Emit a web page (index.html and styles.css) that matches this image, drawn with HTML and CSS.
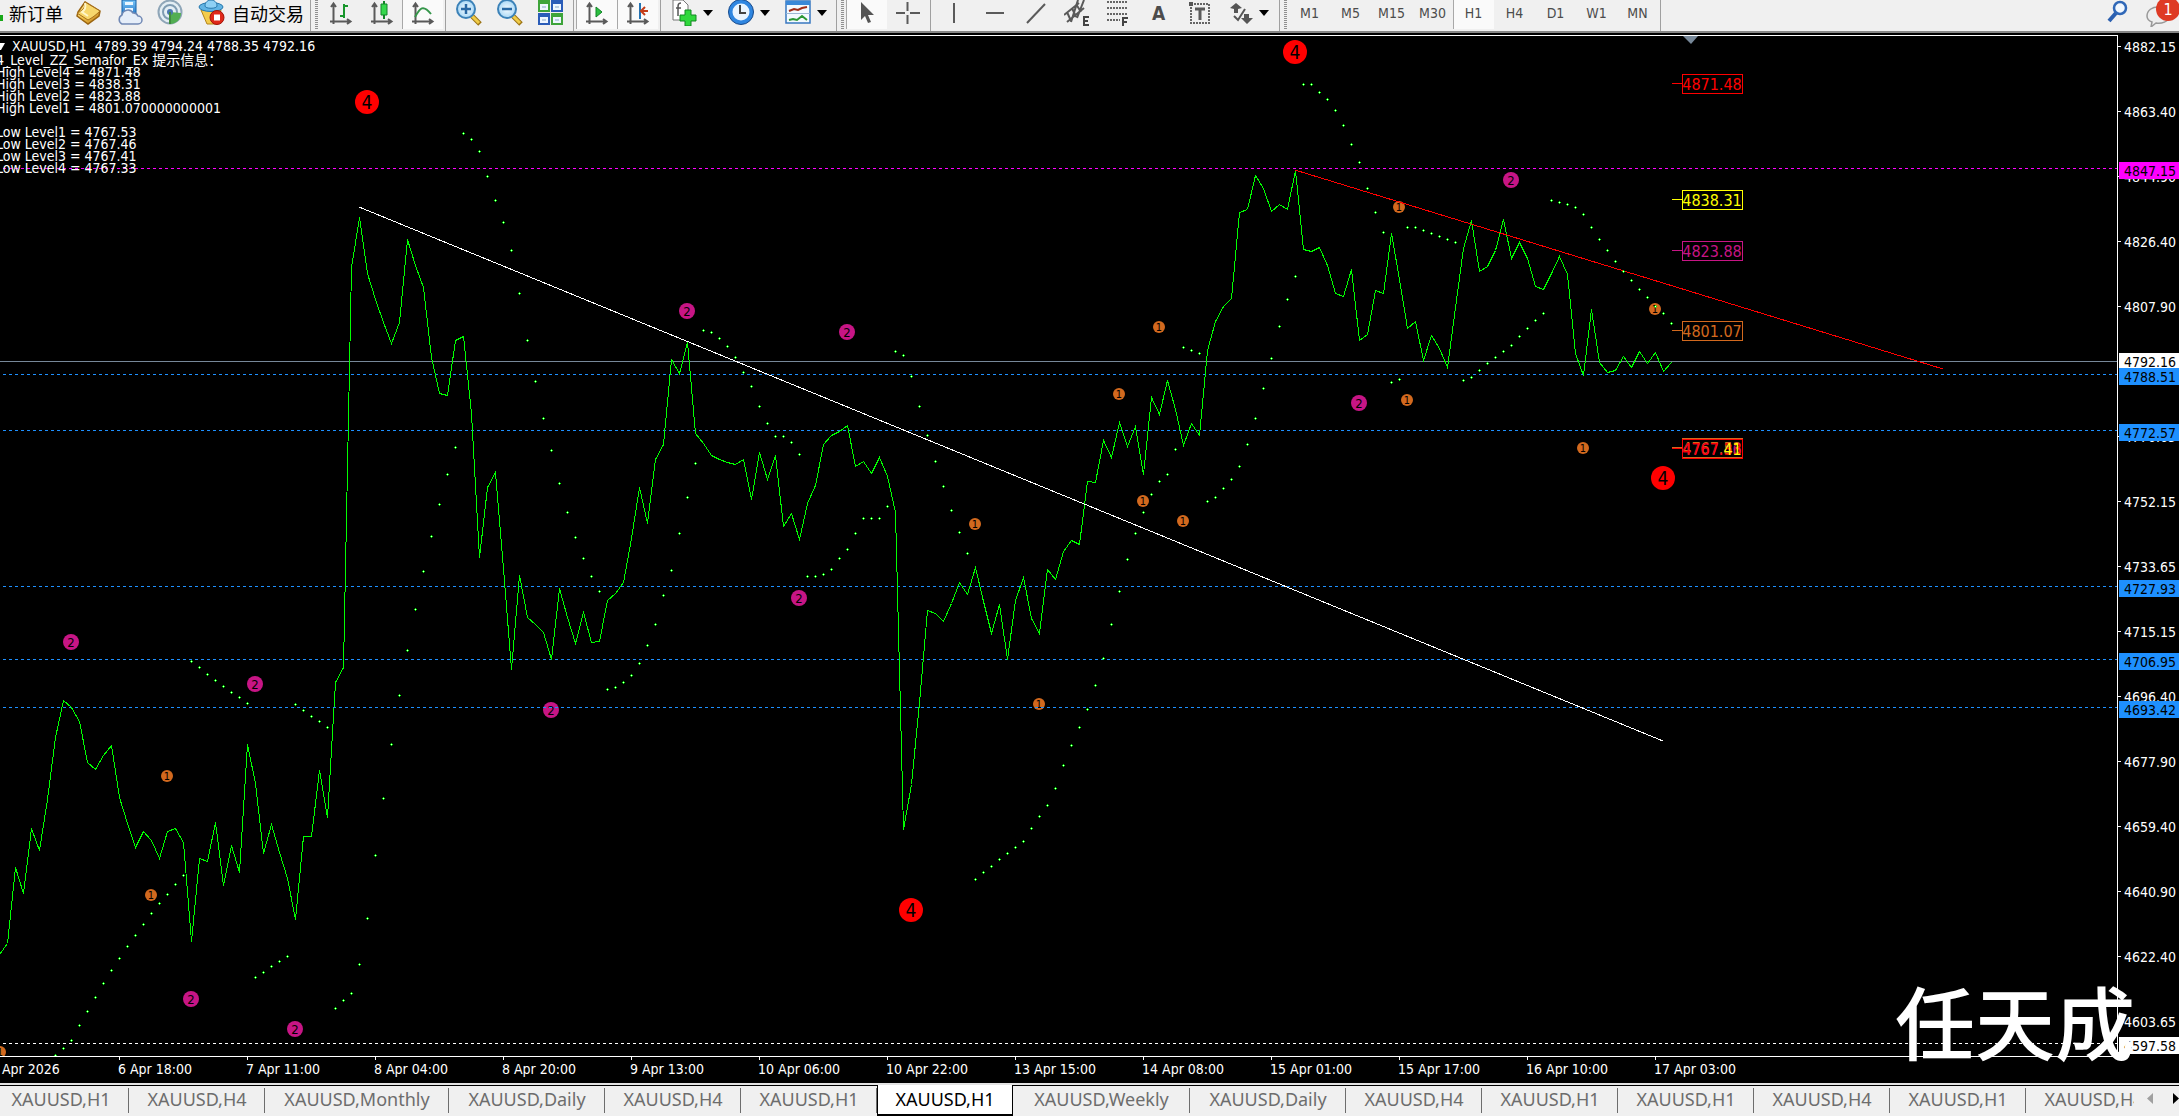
FILE: index.html
```html
<!DOCTYPE html>
<html lang="zh-CN">
<head>
<meta charset="utf-8">
<title>XAUUSD,H1</title>
<link rel="stylesheet" href="styles.css">
</head>
<body>
<svg class="defs" aria-hidden="true">
  <defs>
    <linearGradient id="gold" x1="0" y1="0" x2="1" y2="1"><stop offset="0" stop-color="#fff3a8"/><stop offset=".5" stop-color="#f0c04a"/><stop offset="1" stop-color="#b87812"/></linearGradient>
    <linearGradient id="blue" x1="0" y1="0" x2="0" y2="1"><stop offset="0" stop-color="#7cc8f8"/><stop offset="1" stop-color="#1c6fc4"/></linearGradient>
    <radialGradient id="lens"><stop offset="0" stop-color="#f4fbff"/><stop offset="1" stop-color="#a9d8f6"/></radialGradient>
    <symbol id="axes" viewBox="0 0 24 24"><path d="M4.500 3v20M1 20.500h20M2 6l2.500-3.500L7 6M18 18l3.500 2.500L18 23" fill="none" stroke="#5a5a5a" stroke-width="2"/></symbol>
  </defs>
</svg>

<header class="toolbar">
  <button class="tool tool--order"><svg width="3" height="26" viewBox="0 0 3 26"><path d="M0 15h3v6H0z" fill="#18a818"/></svg><span>新订单</span></button>
  <button class="tool" aria-label="Market"><svg width="26" height="26" viewBox="0 0 26 26"><path d="M9 2l15 9-1 5-11 8-11-8 1-4z" fill="url(#gold)" stroke="#9a6410" stroke-width="1.500"/><path d="M9 2c1 4-1 8-8 11l11 7c4-2 8-5 12-9z" fill="#f7d76c" stroke="#a8701a"/><path d="M9 3c1 4 0 7-3 9l6 4" fill="none" stroke="#fff6c8" stroke-width="2"/></svg></button>
  <button class="tool" aria-label="Cloud"><svg width="26" height="26" viewBox="0 0 26 26"><path d="M5 0h14v16H5z" fill="url(#blue)" stroke="#1560a8"/><path d="M8 2h8v3H8zM8 8h8v3H8z" fill="#e8f6ff"/><path d="M5 24a5 5 0 0 1 0-9 6 6 0 0 1 11-2 5 5 0 0 1 5 3 4 4 0 0 1 0 8z" fill="#e6eef9" stroke="#7088b4" stroke-width="1.500"/></svg></button>
  <button class="tool" aria-label="Signals"><svg width="27" height="26" viewBox="0 0 27 26"><circle cx="13" cy="12" r="11.500" fill="#e4eef4" stroke="#8fa6b8" stroke-width="2"/><circle cx="13" cy="12" r="7" fill="none" stroke="#7f9cb2" stroke-width="2"/><path d="M13 12l11 1c0 6-4 10-10 11z" fill="#52ae52"/><circle cx="13" cy="12" r="3" fill="#4a78b0"/><path d="M13 12v12" stroke="#3f8c3f" stroke-width="2"/></svg></button>
  <button class="tool tool--auto"><svg width="27" height="26" viewBox="0 0 27 26"><path d="M3 10h20l-4 14H9z" fill="#f4cc4c" stroke="#b48418"/><ellipse cx="13" cy="7" rx="12" ry="4.500" fill="#62b4e4" stroke="#2878ac"/><path d="M7 6c0-8 12-8 12 0 0 3-12 3-12 0z" fill="#8ed0f4" stroke="#2878ac"/><circle cx="19" cy="17.500" r="7" fill="#e02818" stroke="#a01408"/><path d="M16 14.500h6v6h-6z" fill="#fff"/></svg><span>自动交易</span></button>
  <i class="sep"></i><i class="grip"></i>
  <button class="tool" aria-label="Bar chart"><svg width="24" height="24"><use href="#axes"/><path d="M15 3v14M15 5h4M11 15h4" stroke="#18962c" stroke-width="2"/></svg></button>
  <button class="tool" aria-label="Candlesticks"><svg width="24" height="24"><use href="#axes"/><path d="M14 0v18" stroke="#128428" stroke-width="2"/><path d="M11 3h6v11h-6z" fill="#35d84c" stroke="#128428"/></svg></button>
  <button class="tool tool--on" aria-label="Line chart"><svg width="24" height="24"><use href="#axes"/><path d="M4 16c5-9 8-13 16-3" fill="none" stroke="#35964a" stroke-width="2"/></svg></button>
  <i class="sep"></i>
  <button class="tool" aria-label="Zoom in"><svg width="26" height="26" viewBox="0 0 26 26"><path d="M16 16l8 8" stroke="#9c7414" stroke-width="5"/><path d="M16 16l7 7" stroke="#f0cc48" stroke-width="3"/><circle cx="10" cy="9" r="9" fill="url(#lens)" stroke="#3c82b8" stroke-width="2"/><path d="M5 9h10M10 4v10" stroke="#2868a4" stroke-width="2.500"/></svg></button>
  <button class="tool" aria-label="Zoom out"><svg width="26" height="26" viewBox="0 0 26 26"><path d="M16 16l8 8" stroke="#9c7414" stroke-width="5"/><path d="M16 16l7 7" stroke="#f0cc48" stroke-width="3"/><circle cx="10" cy="9" r="9" fill="url(#lens)" stroke="#3c82b8" stroke-width="2"/><path d="M5 9h10" stroke="#2868a4" stroke-width="2.500"/></svg></button>
  <button class="tool" aria-label="Tile windows"><svg width="26" height="26" viewBox="0 0 26 26"><path d="M0 0h12v12H0zM13 13h12v12H13z" fill="#3ea43a"/><path d="M13 0h12v12H13zM0 13h12v12H0z" fill="#2a5cb8"/><path d="M2 4h8v6H2zM15 4h8v6h-8zM2 17h8v6H2zM15 17h8v6h-8z" fill="#eef6ff"/><path d="M4 7h4M17 7h4M4 20h4M17 20h4" stroke="#88a8c8"/></svg></button>
  <i class="sep"></i>
  <button class="tool tool--on" aria-label="Auto scroll"><svg width="24" height="24"><use href="#axes"/><path d="M11 6l6 5-6 5z" fill="#2cc040" stroke="#128428"/></svg></button>
  <button class="tool tool--on" aria-label="Chart shift"><svg width="24" height="24"><use href="#axes"/><path d="M14 2v16" stroke="#2474b4" stroke-width="2"/><path d="M22 10h-6m3-4l-4 4 4 4" fill="none" stroke="#c43c18" stroke-width="2"/></svg></button>
  <i class="sep"></i>
  <button class="tool tool--drop" aria-label="Indicators"><svg width="26" height="27" viewBox="0 0 26 27"><path d="M2 1h10l5 5v15H2z" fill="#fff" stroke="#777"/><path d="M10 4c-3 0-3 2-3 5v8M5 9h5" fill="none" stroke="#555" stroke-width="1.500"/><path d="M14 11h6v5h5v6h-5v5h-6v-5H9v-6h5z" fill="#2fd83c" stroke="#108820"/></svg><i class="caret"></i></button>
  <button class="tool tool--drop" aria-label="Periods"><svg width="26" height="26" viewBox="0 0 26 26"><circle cx="13" cy="12" r="10.500" fill="#eaf5ff" stroke="#2f86e0" stroke-width="4"/><circle cx="13" cy="12" r="12.500" fill="none" stroke="#174a8c"/><path d="M12 5v8h6" fill="none" stroke="#444" stroke-width="2"/></svg><i class="caret"></i></button>
  <button class="tool tool--drop" aria-label="Templates"><svg width="26" height="26" viewBox="0 0 26 26"><path d="M1 1h24v22H1z" fill="#f4faff" stroke="#3878c0" stroke-width="1.500"/><path d="M1 1h24v4H1z" fill="#3a88d8"/><path d="M4 11l5-2 4 1 4-2 5-1" fill="none" stroke="#a02c18" stroke-width="2"/><path d="M1 13.500h24" stroke="#9cb8d4"/><path d="M4 20l4-1 4 1 5-4 5 4" fill="none" stroke="#2a9834" stroke-width="2"/></svg><i class="caret"></i></button>
  <i class="sep"></i><i class="grip"></i>
  <button class="tool tool--on" aria-label="Cursor"><svg width="14" height="24" viewBox="0 0 14 24"><path d="M1 1v18l4-4 3 7 3-1-3-7h6z" fill="#555"/></svg></button>
  <button class="tool" aria-label="Crosshair"><svg width="24" height="24" viewBox="0 0 24 24"><path d="M11.500 1v9M11.500 14v9M0 12h9M14 12h10" stroke="#5a5a5a" stroke-width="2"/></svg></button>
  <i class="sep"></i>
  <button class="tool" aria-label="Vertical line"><svg width="24" height="24" viewBox="0 0 24 24"><path d="M12 2v20" stroke="#5a5a5a" stroke-width="2"/></svg></button>
  <button class="tool" aria-label="Horizontal line"><svg width="24" height="24" viewBox="0 0 24 24"><path d="M3 12h18" stroke="#5a5a5a" stroke-width="2"/></svg></button>
  <button class="tool" aria-label="Trend line"><svg width="24" height="24" viewBox="0 0 24 24"><path d="M3 22L21 3" stroke="#5a5a5a" stroke-width="2"/></svg></button>
  <button class="tool" aria-label="Channel"><svg width="26" height="26" viewBox="0 0 26 26"><path d="M0 15L15 3M3 22L20 8M3 12l4 9M8 8l4 9M12 4l5 8M14 0L7 22M20 0l-7 18" fill="none" stroke="#5a5a5a" stroke-width="2"/><path d="M25 17h-5v8h5M20 21h4" fill="none" stroke="#444" stroke-width="2"/></svg></button>
  <button class="tool" aria-label="Fibonacci"><svg width="24" height="26" viewBox="0 0 24 26"><path d="M1 2h21M1 8h21M1 14h21M1 20h13" stroke="#666" stroke-width="2" stroke-dasharray="2 1"/><path d="M22 18h-5v8M17 22h4" fill="none" stroke="#444" stroke-width="2"/></svg></button>
  <button class="tool tool--letter" aria-label="Text">A</button>
  <button class="tool" aria-label="Text label"><svg width="22" height="24" viewBox="0 0 22 24"><path d="M2 3h18v19H2z" fill="none" stroke="#666" stroke-width="2" stroke-dasharray="2 1"/><path d="M6 8h10M11 8v11" stroke="#5a5a5a" stroke-width="3"/><path d="M0 1h4v4H0z" fill="#555"/></svg></button>
  <button class="tool tool--drop" aria-label="Arrows"><svg width="24" height="24" viewBox="0 0 24 24"><path d="M7 2l6 5-4 1v4H5V8L1 7zM15 13h5v4h4l-6 6-6-6h3z" fill="#555"/><path d="M5 15l4 4 7-11" fill="none" stroke="#555" stroke-width="2"/></svg><i class="caret"></i></button>
  <i class="sep"></i><i class="grip"></i>
  <button class="tool">M1</button>
  <button class="tool">M5</button>
  <button class="tool">M15</button>
  <button class="tool">M30</button>
  <button class="tool tool--on">H1</button>
  <button class="tool">H4</button>
  <button class="tool">D1</button>
  <button class="tool">W1</button>
  <button class="tool">MN</button>
  <i class="sep"></i>
  <div class="status">
    <button class="status-item" aria-label="Search"><svg width="22" height="24" viewBox="0 0 22 24"><path d="M9 13l-7 8" stroke="#2c60b0" stroke-width="4"/><circle cx="13" cy="8" r="6" fill="#f2f8ff" stroke="#3068b8" stroke-width="2.500"/></svg></button>
    <button class="status-item" aria-label="Messages"><svg width="33" height="27" viewBox="0 0 33 27"><path d="M1 16c0-12 22-12 22 0 0 6-8 8-13 7l-5 4 1-5c-3-1-5-3-5-6z" fill="#eee" stroke="#999" stroke-width="1.500"/><circle cx="22" cy="9" r="12" fill="#de3a24"/><text x="22" y="15" class="badge-text">1</text></svg></button>
  </div>
</header>

<main class="chart">
  <section class="plot">
    <svg class="canvas" id="plot" aria-label="XAUUSD H1"></svg>
    <div class="info">
      <p class="quote"><svg class="quote-mark" width="12" height="8" viewBox="0 0 12 8"><path d="M0 0h5L1 7H0z" fill="#fff"/></svg>XAUUSD,H1&nbsp; 4789.39 4794.24 4788.35 4792.16</p>
      <p class="comment">4_Level_ZZ_Semafor_Ex 提示信息：
High Level4 = 4871.48
High Level3 = 4838.31
High Level2 = 4823.88
High Level1 = 4801.070000000001

Low Level1 = 4767.53
Low Level2 = 4767.46
Low Level3 = 4767.41
Low Level4 = 4767.33</p>
    </div>
  </section>
  <svg class="price-axis" id="prices"></svg>
  <ol class="time-axis">
    <li>Apr 2026</li><li>6 Apr 18:00</li><li>7 Apr 11:00</li><li>8 Apr 04:00</li><li>8 Apr 20:00</li><li>9 Apr 13:00</li><li>10 Apr 06:00</li><li>10 Apr 22:00</li><li>13 Apr 15:00</li><li>14 Apr 08:00</li><li>15 Apr 01:00</li><li>15 Apr 17:00</li><li>16 Apr 10:00</li><li>17 Apr 03:00</li>
  </ol>
  <div class="signature">任天成</div>
</main>

<nav class="tabs">
  <div class="tab-strip">
    <button class="tab">XAUUSD,H1</button>
    <button class="tab">XAUUSD,H4</button>
    <button class="tab tab--monthly">XAUUSD,Monthly</button>
    <button class="tab tab--daily">XAUUSD,Daily</button>
    <button class="tab">XAUUSD,H4</button>
    <button class="tab">XAUUSD,H1</button>
    <button class="tab tab--active">XAUUSD,H1</button>
    <button class="tab tab--weekly">XAUUSD,Weekly</button>
    <button class="tab tab--daily">XAUUSD,Daily</button>
    <button class="tab">XAUUSD,H4</button>
    <button class="tab">XAUUSD,H1</button>
    <button class="tab">XAUUSD,H1</button>
    <button class="tab">XAUUSD,H4</button>
    <button class="tab">XAUUSD,H1</button>
    <button class="tab">XAUUSD,H4</button>
  </div>
  <button class="scroll" aria-label="Scroll left"><svg width="6" height="11" viewBox="0 0 6 11"><path d="M6 0v11L0 5.500z" fill="#a0a0a0"/></svg></button>
  <button class="scroll" aria-label="Scroll right"><svg width="6" height="11" viewBox="0 0 6 11"><path d="M0 0v11l6-5.500z" fill="#000"/></svg></button>
</nav>
<script src="chart.js"></script>
</body>
</html>
```
FILE: styles.css
```css
* { box-sizing: border-box; }

body {
  margin: 0;
  height: 100vh;
  display: flex;
  flex-direction: column;
  overflow: hidden;
  background: #000;
  color: #fff;
  font-family: "DejaVu Sans Condensed", "Noto Sans", "Noto Sans CJK SC", sans-serif;
  font-size: 14px;
}

button {
  border: 0;
  padding: 0;
  background: none;
  color: inherit;
  font: inherit;
}

.defs { position: absolute; width: 0; height: 0; }

/* Toolbar */
.toolbar {
  flex: none;
  display: flex;
  height: 33px;
  overflow: hidden;
  background: #f0f0f0;
  border-bottom: 2px solid #868686;
  color: #4c4c4c;
}

.tool {
  flex: none;
  display: flex;
  align-items: center;
  justify-content: center;
  width: 41px;
  height: 29px;
  padding-bottom: 4px;
  white-space: nowrap;
}

.tool--on { background: #fafafa; box-shadow: inset 1px 0 #a8a8a8; }
.tool--drop { width: 57px; gap: 6px; }
.tool--letter { font-size: 19px; font-weight: bold; }

.tool--order,
.tool--auto {
  justify-content: flex-start;
  color: #000;
  font-family: "Noto Sans CJK SC", sans-serif;
  font-size: 18px;
}

.tool--order { width: 68px; gap: 6px; }
.tool--auto { width: 117px; gap: 7px; padding-left: 7px; }

.caret {
  border: 5px solid transparent;
  border-top: 6px solid #000;
  border-bottom: 0;
}

.sep { flex: none; width: 1px; margin: 0 2px; background: #a0a0a0; }

.grip {
  flex: none;
  width: 3px;
  height: 29px;
  margin: 0 2px;
  background: repeating-linear-gradient(#909090 0 1px, #f0f0f0 1px 2px);
}

.status { display: flex; gap: 17px; margin-left: auto; }
.status-item { display: flex; align-items: flex-start; }
.badge-text { fill: #fff; font-size: 16px; text-anchor: middle; }

/* Chart */
.chart {
  flex: 1;
  min-height: 0;
  display: grid;
  grid-template: minmax(0, 1fr) 27px / minmax(0, 1fr) 61px;
  position: relative;
  padding-top: 2px;
}

.plot {
  position: relative;
  overflow: hidden;
  border-top: 1px solid #fff;
  border-right: 1px solid #fff;
}

.canvas,
.price-axis { display: block; width: 100%; height: 100%; }

.price-axis { overflow: hidden; padding-top: 1px; }

.info { position: absolute; top: 2px; left: 0; }
.info p { margin: 0; white-space: pre; }
.info .quote { line-height: 16px; }
.info .comment { margin-left: -4px; line-height: 12px; }

.time-axis {
  grid-column: 1 / -1;
  display: flex;
  margin: 0;
  padding: 0;
  overflow: hidden;
  list-style: none;
  background: linear-gradient(#fff, #fff) left top / calc(100% - 61px) 1px no-repeat;
}

.time-axis li {
  flex: none;
  width: 128px;
  padding-top: 1px;
  line-height: 24px;
  background: linear-gradient(#fff, #fff) 1px 0 / 1px 4px no-repeat;
}

.time-axis li:first-child { width: 118px; padding-left: 2px; background: none; }

.signature {
  position: absolute;
  right: 44px;
  bottom: 20px;
  font: 500 80px/88px "Noto Sans CJK SC", sans-serif;
}

.price { font-size: 14px; dominant-baseline: central; }
.level { font-size: 16px; dominant-baseline: central; text-anchor: middle; }
.mark { fill: #000; dominant-baseline: central; text-anchor: middle; }

/* Chart tabs */
.tabs {
  flex: none;
  display: flex;
  height: 35px;
  border-top: 2px solid #e3e3e3;
  border-bottom: 2px solid #fff;
  background: linear-gradient(#000, #000) top / 100% 1px no-repeat #f0f0f0;
  color: #6d6d6d;
  font-family: "Noto Sans", "Open Sans", sans-serif;
  font-size: 18px;
}

.tab-strip {
  flex: 1;
  min-width: 0;
  display: flex;
  margin: 0 13px 0 -7px;
  overflow: hidden;
}

.tab {
  flex: none;
  width: 136px;
  line-height: 28px;
  padding-bottom: 3px;
  background: linear-gradient(#6d6d6d, #6d6d6d) right 3px / 1px 25px no-repeat;
}

.tab--daily { width: 156px; }
.tab--monthly { width: 184px; }
.tab--weekly { width: 177px; }

.tab--active {
  border: 1px solid #000;
  border-top: 0;
  border-bottom-width: 2px;
  padding-bottom: 1px;
  background: #fff;
  color: #000;
}

.scroll { flex: none; display: flex; align-items: center; width: 26px; padding-bottom: 4px; }
.scroll:last-child { width: 6px; }
```
FILE: chart.js
```js
// Bars are 8px apart. Vertical values are window rows; the plot starts at row 36.
const STEP = 8;
const TOP = 36;

const closes = [
  954,943,867,893,828,850,799,737,700,707,721,762,769,755,745,797,823,847,831,840,858,831,828,842,941,858,861,822,885,845,872,744,783,853,824,852,878,919,836,836,770,817,682,667,
  267,217,273,299,322,343,322,239,265,287,357,393,395,340,336,413,557,487,472,568,669,575,617,624,632,659,588,617,643,612,642,641,600,593,582,538,487,523,459,444,359,373,342,433,
  443,455,459,462,464,459,499,452,479,455,526,513,539,503,485,444,435,431,425,466,461,473,457,476,512,829,784,702,610,613,621,603,582,594,567,601,633,604,659,600,577,618,633,
  569,579,551,540,544,481,482,440,457,422,446,426,474,397,414,380,409,445,423,435,350,321,306,298,212,209,175,188,211,204,209,170,249,251,247,265,293,296,269,340,334,290,293,
  233,279,328,321,360,335,348,367,307,248,220,271,266,250,219,258,242,258,286,289,273,256,274,353,375,309,362,372,370,356,367,351,363,352,371,362
];

const sar = [
  [55, [1055,1048,1040,1025,1011,997,983,970,958,946,935,924,913,903,894,884,875]],
  [191, [661,667,674,680,686,692,697,703]],
  [255, [977,972,966,961,956]],
  [295, [704,710,716,721,727]],
  [335, [1008,1000,993,964,918,855,798,744,695,650,609,571,536,504,474,447]],
  [463, [133,139,151,176,200,222,250,293,340,381,418,450,483,512,537,558,576,591]],
  [607, [689,687,682,675,663,645,624,595,570,533,497,463]],
  [703, [330,332,338,346,357,372,386,406,423,436,436,442,454]],
  [807, [576,576,574,569,558,549,533,518,518,518,506]],
  [895, [351,355,376,406,435,461,486,510,532,553]],
  [975, [879,872,866,859,853,847,841,828,816,805,788,765,745,727,709,685,658,624,591,559,533,512,494,481,474,449]],
  [1183, [347,350,353]],
  [1207, [501,497,488,479,466,444,418,388,358,326,299,276]],
  [1303, [84,84,92,99,110,125,144,162,188,212,232]],
  [1391, [382,379]],
  [1407, [227,227,230,233,236,239,242]],
  [1463, [380,377,370,363,357,351,345,336,328,320,313]],
  [1551, [200,202,204,207,214,227,239,250,261,271,280,289,297,306,313,323]]
];

const semafor = {
  4: { r: 12, size: 19, fill: '#f00', at: [[367,102],[1295,52],[911,910],[1663,478]] },
  2: { r: 8, size: 13, fill: '#c71585', at: [[71,642],[255,684],[551,710],[191,999],[295,1029],[687,311],[847,332],[799,598],[1359,403],[1511,180]] },
  1: { r: 6, size: 11, fill: '#d2691e', at: [[167,776],[151,895],[0,1052],[975,524],[1159,327],[1119,394],[1143,501],[1183,521],[1039,704],[1399,207],[1407,400],[1583,448],[1655,309]] }
};

const guides = [[168,'#f0f'],[374,'#1e90ff'],[430,'#1e90ff'],[586,'#1e90ff'],[659,'#1e90ff'],[707,'#1e90ff'],[1043,'#fff']];

const levels = [
  [83,'4871.48','#f00'],[199,'4838.31','#ff0'],[250,'4823.88','#c71585'],[330,'4801.07','#d2691e'],
  [447,'4767.53','#d2691e'],[448,'4767.46','#c71585'],[448,'4767.33','#f00'],[448,'4767.41','#ff0']
];

let out = '';
for (const [n, s] of Object.entries(semafor)) {
  for (const [x, y] of s.at) {
    out += `<circle cx="${x}" cy="${y}" r="${s.r}" fill="${s.fill}"/><text class="mark" x="${x}" y="${y}" font-size="${s.size}">${n}</text>`;
  }
}
out += '<g shape-rendering="crispEdges" fill="none">';
for (const [y, c] of guides) {
  out += `<line x1="3" x2="100%" y1="${y}.5" y2="${y}.5" stroke="${c}" stroke-dasharray="3 3"/>`;
}
out += '<line x1="0" x2="100%" y1="361.5" y2="361.5" stroke="#778899"/>';
out += `<polyline stroke="#0f0" points="${closes.map((y, i) => `${i * STEP - 0.5},${y + 0.5}`).join(' ')}"/>`;
out += '<line x1="359" y1="207" x2="1663" y2="741" stroke="#fff"/>';
out += '<line x1="1295" y1="170" x2="1943" y2="369" stroke="#f00"/>';
for (const [x0, ys] of sar) {
  ys.forEach((y, i) => {
    const x = x0 + i * STEP;
    out += `<path d="M${x - 1} ${y}h3v1h-3zM${x} ${y - 1}h1v3h-1z" fill="#0f0"/><path d="M${x} ${y}h1v1h-1z" fill="#dfd"/>`;
  });
}
levels.forEach(([y, , c]) => {
  if (c !== '#ff0' || y < 400) out += `<path d="M1672 ${y}.5h10v-9h60v19h-60v-10" stroke="${c}"/>`;
});
out += '</g>';
levels.forEach(([y, t, c], i) => {
  // The four low levels share one box: only the last decimals differ.
  const last = i === levels.length - 1;
  out += last
    ? `<text class="level" x="1712" y="${y + 1}" fill="none">4767.<tspan fill="${c}">41</tspan></text>`
    : `<text class="level" x="1712" y="${y + 1}" fill="${c}">${t}</text>`;
});
out += '<path d="M1683 36h15l-7 8z" fill="#778899"/>';
document.getElementById('plot').innerHTML = `<g transform="translate(0 ${-TOP})">${out}</g>`;

const ticks = [[47,'4882.15'],[112,'4863.40'],[177,'4844.90'],[242,'4826.40'],[307,'4807.90'],[437,'4770.65'],[502,'4752.15'],[567,'4733.65'],[632,'4715.15'],[697,'4696.40'],[762,'4677.90'],[827,'4659.40'],[892,'4640.90'],[957,'4622.40'],[1022,'4603.65']];
const tags = [[171,'4847.15','#f0f'],[362,'4792.16','#fff'],[377,'4788.51','#1e90ff'],[433,'4772.57','#1e90ff'],[589,'4727.93','#1e90ff'],[662,'4706.95','#1e90ff'],[710,'4693.42','#1e90ff'],[1046,'4597.58','#fff']];
let axis = '';
for (const [y, t] of ticks) {
  axis += `<path d="M0 ${y - 1}h3v1H0z" fill="#fff"/><text class="price" x="6" y="${y}" fill="#fff">${t}</text>`;
}
for (const [y, t, c] of tags) {
  axis += `<rect x="1" y="${y - 9}" width="60" height="17" fill="${c}"/><text class="price" x="6" y="${y}" fill="#000">${t}</text>`;
}
document.getElementById('prices').innerHTML = `<g transform="translate(0 ${-TOP})">${axis}</g>`;
```
